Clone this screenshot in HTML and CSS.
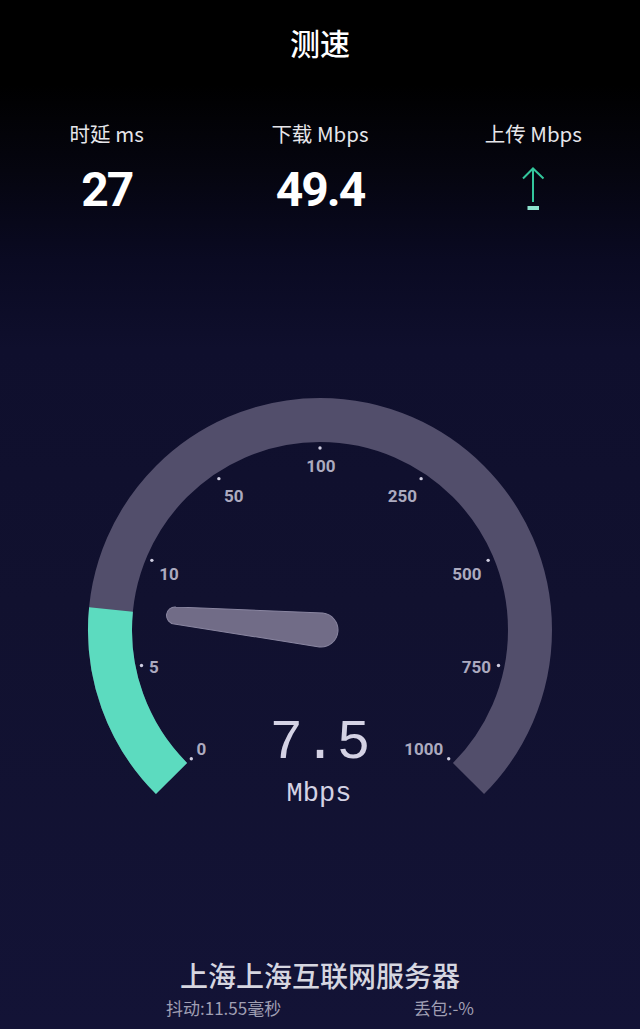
FILE: index.html
```html
<!DOCTYPE html>
<html lang="zh">
<head>
<meta charset="utf-8">
<title>测速</title>
<link rel="stylesheet" href="styles.css">
</head>
<body>
<div class="page">
  <header class="title">测速</header>
  <section class="stats">
    <div class="stat">
      <div class="stat-label">时延 ms</div>
      <div class="stat-value">27</div>
    </div>
    <div class="stat">
      <div class="stat-label">下载 Mbps</div>
      <div class="stat-value">49.4</div>
    </div>
    <div class="stat">
      <div class="stat-label">上传 Mbps</div>
      <div class="stat-value">
        <svg class="upload-icon" width="24" height="50" viewBox="0 0 24 50">
          <path class="upload-arrow" d="M12 4 V37 M2 13.5 L12 3.5 L22.5 13.5"/>
          <rect class="upload-bar" x="6.5" y="41" width="11.5" height="4"/>
        </svg>
      </div>
    </div>
  </section>

  <svg class="gauge" width="480" height="420" viewBox="0 0 480 420">
    <path class="arc-track" d="M 91.51 388.49 A 210 210 0 1 1 388.49 388.49"/>
    <path class="arc-fill" d="M 91.51 388.49 A 210 210 0 0 1 31.0 219.5"/>
    <g class="dots">
      <circle cx="111.31" cy="368.69" r="1.7"/>
      <circle cx="61.5" cy="275.51" r="1.7"/>
      <circle cx="71.85" cy="170.35" r="1.7"/>
      <circle cx="138.89" cy="88.67" r="1.7"/>
      <circle cx="240" cy="58" r="1.7"/>
      <circle cx="341.11" cy="88.67" r="1.7"/>
      <circle cx="408.15" cy="170.35" r="1.7"/>
      <circle cx="418.5" cy="275.51" r="1.7"/>
      <circle cx="368.69" cy="368.69" r="1.7"/>
    </g>
    <g class="ticks">
      <text x="121.5" y="365">0</text>
      <text x="74" y="282.7">5</text>
      <text x="89" y="190">10</text>
      <text x="153.7" y="111.7">50</text>
      <text x="240.8" y="82.3">100</text>
      <text x="322.3" y="111.7">250</text>
      <text x="387" y="190">500</text>
      <text x="396.3" y="282.7">750</text>
      <text x="343.8" y="365">1000</text>
    </g>
    <g transform="translate(241 240) rotate(5.67)">
      <path class="needle" d="M 0 -17 L -146.7 -8.5 A 8.5 8.5 0 0 0 -146.7 8.5 L 0 17 A 17 17 0 0 0 0 -17 Z"/>
    </g>
    <text class="reading" x="240" y="368.3">7.5</text>
    <text class="reading-unit" x="239" y="410.7">Mbps</text>
  </svg>

  <footer class="server">
    <div class="server-name">上海上海互联网服务器</div>
    <div class="meta">
      <span>抖动:11.55毫秒</span>
      <span>丢包:-%</span>
    </div>
  </footer>
</div>
</body>
</html>
```

FILE: styles.css
```css
html, body {
  margin: 0;
  padding: 0;
}

body {
  width: 640px;
  height: 1029px;
  overflow: hidden;
  background: linear-gradient(to bottom,
    #000000 0px,
    #000000 85px,
    #05050f 170px,
    #0a0a22 260px,
    #0f0f2d 350px,
    #11112f 600px,
    #131336 1029px);
  font-family: Roboto, "Noto Sans CJK SC", sans-serif;
  color: #ffffff;
}

.page {
  width: 640px;
  height: 1029px;
}

.title {
  height: 84px;
  line-height: 84px;
  text-align: center;
  font-family: "Noto Sans CJK SC", sans-serif;
  font-size: 30px;
  font-weight: 500;
  color: #ffffff;
}

.stats {
  display: grid;
  grid-template-columns: 1fr 1fr 1fr;
  margin-top: 34px;
}

.stat {
  display: flex;
  flex-direction: column;
  align-items: center;
}

.stat-label {
  line-height: 30px;
  font-size: 20.5px;
  color: #e6e6ea;
  font-family: "Noto Sans CJK SC", sans-serif;
}

.stat-value {
  margin-top: 17px;
  height: 50px;
  line-height: 50px;
  font-family: Roboto, sans-serif;
  font-size: 48px;
  font-weight: 700;
  letter-spacing: -2px;
  color: #ffffff;
}

.upload-icon {
  display: block;
}

.upload-arrow {
  fill: none;
  stroke: #33c69c;
  stroke-width: 2;
}

.upload-bar {
  fill: #8de2ce;
}

.gauge {
  display: block;
  margin: 175px auto 0;
}

.arc-track {
  fill: none;
  stroke: #524e6b;
  stroke-width: 44;
}

.arc-fill {
  fill: none;
  stroke: #5cdbbf;
  stroke-width: 44;
}

.dots circle {
  fill: #cfcde0;
}

.ticks text {
  font-family: Roboto, sans-serif;
  font-weight: 700;
  font-size: 17px;
  fill: #acaabf;
  text-anchor: middle;
}

.needle {
  fill: #716c87;
  stroke: #8a86a1;
  stroke-width: 1;
}

.reading {
  font-family: "Liberation Mono", monospace;
  font-size: 56px;
  fill: #d4d2e4;
  text-anchor: middle;
}

.reading-unit {
  font-family: "Liberation Mono", monospace;
  font-size: 27px;
  fill: #d4d2e4;
  text-anchor: middle;
}

.server {
  margin-top: 145px;
}

.server-name {
  line-height: 40px;
  font-size: 28px;
  font-weight: 500;
  text-align: center;
  color: #d6d6e0;
  font-family: "Noto Sans CJK SC", sans-serif;
}

.meta {
  width: 308px;
  margin: 1px auto 0;
  display: flex;
  justify-content: space-between;
  font-size: 17px;
  line-height: 24px;
  color: #a09fb3;
  font-family: "Noto Sans CJK SC", sans-serif;
}
```
